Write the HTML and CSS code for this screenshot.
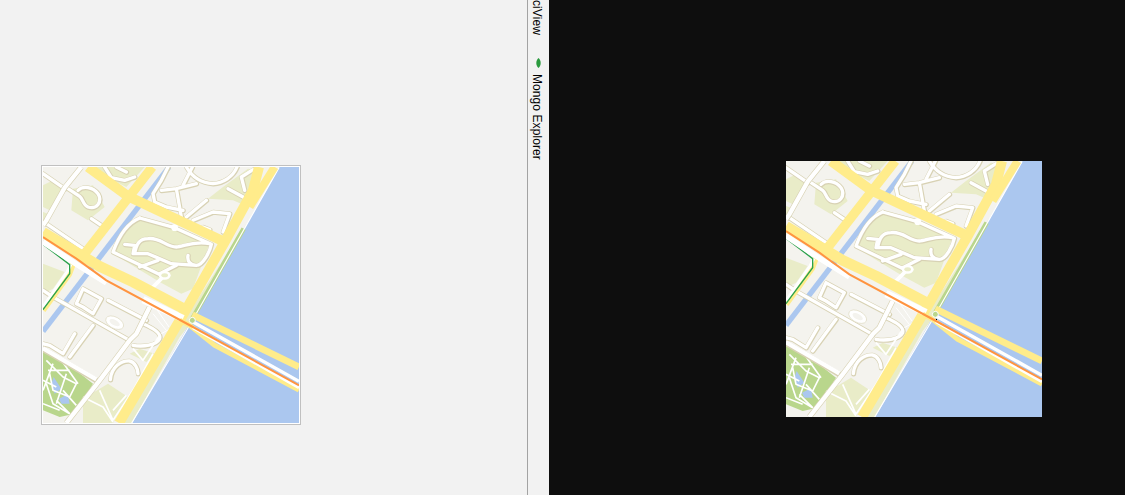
FILE: index.html
```html
<!DOCTYPE html>
<html lang="en">
<head>
<meta charset="utf-8">
<title>Map tile preview</title>
<link rel="stylesheet" href="styles.css">
</head>
<body>
<svg class="defs" width="0" height="0" aria-hidden="true">
  <defs>
    <g id="streets" fill="none" stroke-linecap="round" stroke-linejoin="round">
      <path d="M30 50L95 95M40 200L150 275"/>
      <path d="M105 95L140 118C150 125 150 145 165 150C190 158 210 135 195 110C180 90 150 85 135 100M175 185L205 205"/>
      <path d="M215 30L235 62L275 70L305 60M250 30L280 45"/>
      <path d="M460 30C480 65 510 78 540 80C570 78 600 60 612 30"/>
      <path d="M405 30L385 70L360 110L365 135L400 150L450 160M385 100L430 95L490 80M430 95L445 180M478 30L450 85M460 180L520 130M480 190L540 165L590 170L570 225M510 210L530 218M585 95L640 125M625 60L635 100M625 60L660 38"/>
      <path d="M320 183L425 212L535 262C530 285 510 325 490 325C470 325 462 310 465 295M490 325L415 320L345 290L300 290L305 265L275 262M305 290C310 260 320 245 345 245C380 240 400 270 430 270C450 270 480 250 530 260M320 330L375 310"/>
      <path d="M320 183C290 195 260 230 240 285L385 355M380 350L430 325"/>
      <path d="M150 395L205 425L180 470L150 450L130 440L150 395M60 420L290 550M225 430L340 490"/>
      <path d="M330 500C365 515 385 530 380 545C370 565 330 570 300 565"/>
      <path d="M180 505L110 600M125 530L90 590L50 565L30 560M232 668C235 630 265 610 290 612C305 615 315 635 315 650"/>
      <path d="M30 400L60 420"/>
    </g>
    <g id="tile">
      <rect x="30" y="30" width="768" height="768" fill="#f4f3ee"/>
      <path d="M120 95L180 85L215 150L165 190L115 160ZM30 320L95 345L60 395L30 410ZM30 85L60 70L90 100L50 160L30 150ZM180 30H335L280 90L220 60ZM320 180L530 258L480 395L445 410L380 375L240 290L265 220ZM525 125L570 90L645 35L665 40L635 145L600 130ZM290 590L320 575L365 590L340 615ZM150 725L225 680L285 720L240 798H150ZM30 200L45 170L30 165ZM640 200L585 300L480 490L440 540L296 798H270L440 510Z" fill="#e9ecc8"/>
      <path d="M30 585L110 625L180 680L125 770L80 780L30 760Z" fill="#b9d68c"/>
      <path d="M62 660L85 695L65 710L55 680ZM78 725L105 712L110 740L85 740Z" fill="#abc7ef"/>
      <path d="M408 30L30 523" stroke="#abc7ef" stroke-width="16" fill="none"/>
      <path d="M740 30L298 798H798V30Z" fill="#abc7ef"/>
      <path d="M632 215L475 490" stroke="#b9d68c" stroke-width="14" fill="none"/>
      <path d="M738 32L470 505L296 798" stroke="#fff" stroke-width="3.5" fill="none"/>
      <use href="#streets" stroke="#d8d2b4" stroke-width="15" transform="translate(1 1)"/>
      <use href="#streets" stroke="#fff" stroke-width="10"/>
      <g fill="none" stroke="#fff" stroke-width="5" stroke-linejoin="round">
        <path d="M300 575L330 610L380 535M360 590L300 700L240 790M150 720L210 750L240 795M200 700L240 790M280 715L240 760"/>
        <path d="M40 610L90 660L130 680L110 720L60 700L50 650M60 620L30 700M70 730L110 770L60 740L40 680M100 650L70 740M30 740L80 760M45 640L110 640M85 610L135 680M30 670L70 690M90 700L130 745"/>
      </g>
      <path d="M360 470L400 520M372 458L408 510M385 530L440 500" fill="none" stroke="#fff" stroke-width="3"/>
      <g fill="none" stroke-linejoin="round">
        <path d="M30 577L190 670M145 30L95 92L40 190L30 205M350 450L310 530L290 550L200 670L100 798" stroke="#d8d2b4" stroke-width="17"/>
        <path d="M30 574L190 667M145 30L95 92L40 190L30 205M350 450L310 530L290 550L200 670L100 798" stroke="#fff" stroke-width="13"/>
      </g>
      <circle cx="425" cy="212" r="10" fill="#fff"/>
      <path d="M395 355L350 400" stroke="#fff" stroke-width="11"/>
      <ellipse cx="395" cy="355" rx="18" ry="13" fill="#fff"/>
      <ellipse cx="395" cy="355" rx="10" ry="6" fill="#e9ecc8"/>
      <ellipse cx="245" cy="497" rx="29" ry="17" transform="rotate(28 245 497)" fill="#fff" stroke="#d8d2b4" stroke-width="1.5"/>
      <ellipse cx="245" cy="497" rx="17" ry="8" transform="rotate(28 245 497)" fill="#f4f3ee"/>
      <g fill="none" stroke="#ffec8b" stroke-linejoin="round">
        <path d="M165 30L285 118L575 255" stroke-width="30"/>
        <path d="M358 30L155 290" stroke-width="28"/>
        <path d="M678 30L660 100L575 255L455 465L258 798" stroke-width="30"/>
        <path d="M725 30L650 150" stroke-width="24"/>
        <path d="M30 226L100 268L200 328L300 375L465 462" stroke-width="32"/>
        <path d="M478 473L798 630" stroke-width="20"/>
      </g>
      <path d="M30 460L108 352L120 320" stroke="#ffec8b" stroke-width="18" fill="none"/>
      <path d="M30 450L102 345L114 322" stroke="#fff" stroke-width="9" fill="none"/>
      <path d="M30 262L110 323V350L30 458" stroke="#2ba24c" stroke-width="4" fill="none"/>
      <path d="M30 255L130 322L220 378" stroke="#fff" stroke-width="16" fill="none"/>
      <path d="M330 428L450 485" stroke="#fff" stroke-width="22" fill="none"/>
      <path d="M440 490L470 505L545 565L798 699" stroke="#ffec8b" stroke-width="15" fill="none" stroke-linejoin="round"/>
      <path d="M480 495L798 673M480 512L798 692" stroke="#fff" stroke-width="10" fill="none"/>
      <path d="M30 240L130 305L220 370L480 510L798 685" stroke="#ff9440" stroke-width="6" fill="none"/>
      <circle cx="478" cy="490" r="9" fill="#b9d68c" stroke="#fff" stroke-width="3"/>
    </g>
  </defs>
</svg>
<main class="workspace">
  <section class="pane-left">
    <div class="tile-frame">
      <svg class="tile" viewBox="30 30 768 768" role="img" aria-label="Map tile"><use href="#tile"/></svg>
    </div>
  </section>
  <aside class="tool-strip">
    <span class="tool-label">ciView</span>
    <span class="tool-item">
      <svg class="leaf" viewBox="0 0 8 12" aria-hidden="true"><path d="M4 0C7.5 3 7.5 9 4 12C.5 9 .5 3 4 0Z"/></svg>
      <span class="tool-label">Mongo Explorer</span>
    </span>
  </aside>
  <section class="pane-right">
    <svg class="tile" viewBox="30 30 768 768" role="img" aria-label="Map tile"><use href="#tile"/><rect x="480" y="504" width="3" height="3"/></svg>
  </section>
</main>
</body>
</html>
```
FILE: styles.css
```css
html, body {
  margin: 0;
  height: 100%;
  overflow: hidden;
}

.defs {
  display: block;
  height: 0;
}

.workspace {
  display: flex;
  width: 1125px;
  height: 495px;
  font-family: "Liberation Sans", Arial, sans-serif;
}

.pane-left {
  box-sizing: border-box;
  width: 527px;
  padding: 165px 0 0 41px;
  background: #f2f2f2;
}

.tile-frame {
  width: 256px;
  height: 256px;
  padding: 1px;
  border: 1px solid #c0c0c0;
  background: #fff;
}

.tile {
  display: block;
  width: 256px;
  height: 256px;
}

.tool-strip {
  box-sizing: border-box;
  display: flex;
  flex-direction: column;
  align-items: flex-start;
  gap: 23px;
  width: 22px;
  height: 495px;
  padding-left: 1px;
  overflow: hidden;
  border-left: 1px solid #a3a3a3;
  background: #f2f2f2;
}

.tool-label {
  writing-mode: vertical-rl;
  font-size: 12px;
  line-height: 16px;
  letter-spacing: 0.08px;
  color: #000;
  white-space: nowrap;
}

.tool-item {
  display: flex;
  flex-direction: column;
  align-items: flex-start;
  gap: 6px;
}

.leaf {
  display: block;
  width: 7px;
  height: 10px;
  margin-left: 6px;
  fill: #2a9a3e;
}

.pane-right {
  box-sizing: border-box;
  flex: 1;
  padding: 161px 0 0 237px;
  background: #0e0e0e;
}
```
